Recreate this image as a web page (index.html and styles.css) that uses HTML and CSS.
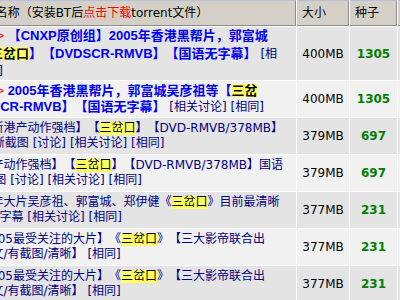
FILE: index.html
```html
<!DOCTYPE html>
<html lang="zh-CN">
<head>
<meta charset="utf-8">
<title>种子列表</title>
<link rel="stylesheet" href="styles.css">
</head>
<body>
<table class="list">
  <thead>
    <tr>
      <th class="c-name">名称（安装BT后<span class="red">点击下载</span>torrent文件）</th>
      <th class="c-size">大小</th>
      <th class="c-seed">种子</th>
      <th class="c-more"></th>
    </tr>
  </thead>
  <tbody>
    <tr class="odd r1">
      <td class="name"><span class="tag">〖原创首发〗&gt;</span><b class="t"> 【CNXP原创组】2005年香港黑帮片，郭富城<br>吴彦祖等【<span class="hl">三岔口</span>】【DVDSCR-RMVB】【国语无字幕】</b> <a class="lk">[相<br>关讨论]</a> <a class="lk">[相同]</a></td>
      <td class="size">400MB</td>
      <td class="seed">1305</td>
      <td></td>
    </tr>
    <tr class="even">
      <td class="name"><span class="tag">〖原创首发〗&gt;</span><b class="t"> 2005年香港黑帮片，郭富城吴彦祖等【<span class="hl">三岔</span><br><span class="hl">口</span>】【DVDSCR-RMVB】【国语无字幕】</b> <a class="lk">[相关讨论]</a> <a class="lk">[相同]</a></td>
      <td class="size">400MB</td>
      <td class="seed">1305</td>
      <td></td>
    </tr>
    <tr class="odd">
      <td class="name"><a class="lk">【2005年最新港产动作强档】【<span class="hl">三岔口</span>】【DVD-RMVB/378MB】<br>国语 中字/清晰截图</a> <a class="lk">[讨论]</a> <a class="lk">[相关讨论]</a> <a class="lk">[相同]</a></td>
      <td class="size">379MB</td>
      <td class="seed">697</td>
      <td></td>
    </tr>
    <tr class="even">
      <td class="name"><a class="lk">【2005新港产动作强档】【<span class="hl">三岔口</span>】【DVD-RMVB/378MB】国语<br>[中字]清晰截图</a> <a class="lk">[讨论]</a> <a class="lk">[相关讨论]</a> <a class="lk">[相同]</a></td>
      <td class="size">379MB</td>
      <td class="seed">697</td>
      <td></td>
    </tr>
    <tr class="odd">
      <td class="name"><a class="lk">【港片2005年大片吴彦祖、郭富城、郑伊健《<span class="hl">三岔口</span>》目前最清晰<br>DVD国语中文字幕</a> <a class="lk">[相关讨论]</a> <a class="lk">[相同]</a></td>
      <td class="size">377MB</td>
      <td class="seed">231</td>
      <td></td>
    </tr>
    <tr class="even">
      <td class="name"><a class="lk">[三岔口]【2005最受关注的大片】《<span class="hl">三岔口</span>》【三大影帝联合出<br>演】DVD/中文/有截图/清晰】</a> <a class="lk">[相同]</a></td>
      <td class="size">377MB</td>
      <td class="seed">231</td>
      <td></td>
    </tr>
    <tr class="odd">
      <td class="name"><a class="lk">[三岔口]【2005最受关注的大片】《<span class="hl">三岔口</span>》【三大影帝联合出<br>演】DVD/中文/有截图/清晰】</a> <a class="lk">[相同]</a></td>
      <td class="size">377MB</td>
      <td class="seed">231</td>
      <td></td>
    </tr>
  </tbody>
</table>
</body>
</html>
```
FILE: styles.css
```css
html, body {
  margin: 0;
  padding: 0;
  overflow: hidden;
  background: #ffffff;
}

body {
  font-family: "DejaVu Sans", "Noto Sans CJK SC", sans-serif;
  font-size: 12px;
  color: #000000;
  text-spacing-trim: space-all;
}

.list {
  border-collapse: separate;
  border-spacing: 1px;
  table-layout: fixed;
  width: 535px;
  margin: -1px 0 0 -76px;
  background: #ffffff;
}

.list th,
.list td {
  box-sizing: border-box;
}

.list th {
  height: 26px;
  padding: 0 0 0 5px;
  background: #d4d0c8;
  border-top: 1px solid #b4c0dc;
  border-right: 1px solid #8c8c8c;
  border-bottom: 1px solid #8c8c8c;
  font-weight: normal;
  text-align: left;
  line-height: 16px;
  white-space: nowrap;
}

.list th.c-name {
  width: 371px;
  text-align: center;
  padding: 0 16px 0 0;
}

.c-size { width: 52px; }
.c-seed { width: 47px; }
.c-more { width: 60px; }

.red { color: #ff0000; }

.list td {
  height: 36px;
  padding: 0;
  vertical-align: middle;
}

.list .r1 td { height: 52px; }

.odd td { background: #e4e4e4; }
.even td { background: #f1f1f1; }

.name {
  padding-left: 3px;
  line-height: 15px;
  white-space: nowrap;
  overflow: hidden;
}

.r1 .name { line-height: 17px; }

.size {
  text-align: center;
}

.seed {
  text-align: center;
  font-weight: bold;
  color: #008000;
}

.tag {
  color: #ff0000;
  font-family: "Liberation Sans", "Noto Sans CJK SC", sans-serif;
}

.t {
  color: #0000f0;
  font-weight: bold;
  font-size: 13px;
  font-family: "Liberation Sans", "Noto Sans CJK SC", sans-serif;
}

.hl {
  display: inline-block;
  line-height: 13px;
  background: #ffff60;
  color: #000000;
}

.lk {
  color: #000080;
  text-decoration: none;
}
```
